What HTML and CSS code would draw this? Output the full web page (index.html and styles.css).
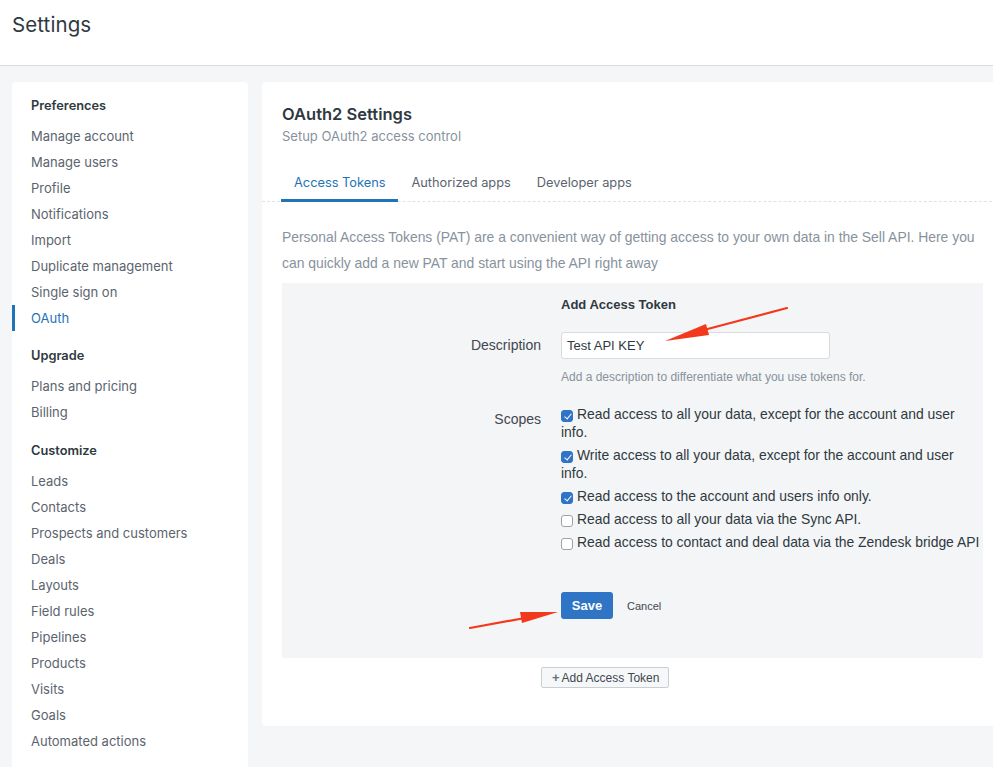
FILE: index.html
```html
<!DOCTYPE html>
<html>
<head>
<meta charset="utf-8">
<link rel="stylesheet" href="styles.css">
</head>
<body>
<div class="page">
  <header class="topbar"><h1>Settings</h1></header>
  <div class="content">
    <nav class="sidebar">
      <div class="group">
        <div class="group-title">Preferences</div>
        <a class="item">Manage account</a>
        <a class="item">Manage users</a>
        <a class="item">Profile</a>
        <a class="item">Notifications</a>
        <a class="item">Import</a>
        <a class="item">Duplicate management</a>
        <a class="item">Single sign on</a>
        <a class="item active">OAuth</a>
      </div>
      <div class="group">
        <div class="group-title">Upgrade</div>
        <a class="item">Plans and pricing</a>
        <a class="item">Billing</a>
      </div>
      <div class="group group-last">
        <div class="group-title">Customize</div>
        <a class="item">Leads</a>
        <a class="item">Contacts</a>
        <a class="item">Prospects and customers</a>
        <a class="item">Deals</a>
        <a class="item">Layouts</a>
        <a class="item">Field rules</a>
        <a class="item">Pipelines</a>
        <a class="item">Products</a>
        <a class="item">Visits</a>
        <a class="item">Goals</a>
        <a class="item">Automated actions</a>
      </div>
    </nav>
    <main class="card">
      <h2 class="card-title">OAuth2 Settings</h2>
      <div class="card-sub">Setup OAuth2 access control</div>
      <div class="tabs">
        <span class="tab active">Access Tokens</span>
        <span class="tab">Authorized apps</span>
        <span class="tab">Developer apps</span>
      </div>
      <p class="intro">Personal Access Tokens (PAT) are a convenient way of getting access to your own data in the Sell API. Here you can quickly add a new PAT and start using the API right away</p>
      <section class="panel">
        <div class="row">
          <div class="label"></div>
          <div class="field"><div class="panel-title">Add Access Token</div></div>
        </div>
        <div class="row row-desc">
          <div class="label">Description</div>
          <div class="field">
            <div class="input">Test API KEY</div>
            <div class="help">Add a description to differentiate what you use tokens for.</div>
          </div>
        </div>
        <div class="row row-scopes">
          <div class="label">Scopes</div>
          <div class="field scopes">
            <div class="scope"><span class="cb on"></span>Read access to all your data, except for the account and user info.</div>
            <div class="scope"><span class="cb on"></span>Write access to all your data, except for the account and user info.</div>
            <div class="scope"><span class="cb on"></span>Read access to the account and users info only.</div>
            <div class="scope"><span class="cb"></span>Read access to all your data via the Sync API.</div>
            <div class="scope"><span class="cb"></span>Read access to contact and deal data via the Zendesk bridge API</div>
          </div>
        </div>
        <div class="row row-actions">
          <div class="label"></div>
          <div class="field actions">
            <button class="btn-save">Save</button>
            <span class="cancel">Cancel</span>
          </div>
        </div>
      </section>
      <div class="add-wrap"><button class="btn-add"><span class="plus">+</span>Add Access Token</button></div>
    </main>
  </div>
  <svg class="arrows" width="993" height="767" viewBox="0 0 993 767">
    <line x1="787" y1="308" x2="700" y2="331" stroke="#f2391b" stroke-width="2.2" stroke-linecap="round"/>
    <polygon points="665,341 706,324 709,335" fill="#f2391b"/>
    <line x1="470" y1="628" x2="525" y2="618" stroke="#f2391b" stroke-width="2.2" stroke-linecap="round"/>
    <polygon points="558,612 520,612 522,623" fill="#f2391b"/>
  </svg>
</div>
</body>
</html>
```
FILE: styles.css
```css
* { box-sizing: border-box; }
html, body { margin: 0; padding: 0; }
body {
  background: #f5f6f7;
  font-family: Inter, "Noto Sans", sans-serif;
  color: #2f3941;
  width: 993px;
  height: 767px;
  overflow: hidden;
}
.page { position: relative; width: 993px; height: 767px; overflow: hidden; }
.topbar {
  height: 66px;
  background: #fff;
  border-bottom: 1px solid #d8dcde;
  padding: 11px 12px 0;
}
.topbar h1 {
  margin: 0;
  font-weight: 400;
  font-size: 20.5px;
  line-height: 28px;
  color: #2f3941;
  letter-spacing: 0.1px;
}
.content {
  display: flex;
  gap: 14px;
  padding: 16px 0 0 12px;
  align-items: flex-start;
}
.sidebar {
  width: 236px;
  flex: none;
  background: #fff;
  border-radius: 4px;
  padding: 14px 0 40px;
  height: 720px;
}
.group { display: flex; flex-direction: column; margin-bottom: 15px; }
.group-title {
  font-weight: 600;
  font-size: 12.8px;
  line-height: 20px;
  padding-left: 19px;
  margin-bottom: 7px;
  color: #2f3941;
}
.group-last .group-title { margin-top: 1px; }
.item {
  font-size: 13px;
  line-height: 26px;
  padding-left: 16px;
  color: #5b646e;
  border-left: 3px solid transparent;
  white-space: nowrap;
}
.item.active { border-left-color: #1f73b7; color: #1f73b7; }
.card {
  width: 760px;
  flex: none;
  background: #fff;
  border-radius: 4px;
  padding: 21px 0 38px 20px;
}
.card-title {
  margin: 0;
  font-size: 16.5px;
  line-height: 22px;
  font-weight: 600;
  color: #2f3941;
}
.card-sub {
  font-size: 13px;
  line-height: 18px;
  color: #87929d;
  margin-top: 2px;
}
.tabs {
  display: flex;
  margin: 23px 0 0 -20px;
  padding-left: 19px;
  border-bottom: 1px dashed #dfe2e5;
}
.tab {
  font-size: 12.8px;
  line-height: 20px;
  padding: 5px 13px 6px;
  color: #5b646e;
  border-bottom: 3px solid transparent;
  margin-bottom: -1px;
}
.tab.active { color: #1f73b7; border-bottom-color: #1f73b7; }
.intro {
  margin: 22px 10px 7px 0;
  font-family: "Liberation Sans", Arial, sans-serif;
  font-size: 13.9px;
  line-height: 26px;
  color: #87929d;
  width: 705px;
}
.panel {
  width: 701px;
  background: #f4f5f6;
  padding: 11px 0 39px;
  font-family: "Liberation Sans", Arial, sans-serif;
}
.row { display: flex; gap: 20px; }
.label {
  width: 259px;
  flex: none;
  text-align: right;
  font-size: 14px;
  color: #3f4750;
}
.field { flex: 1; min-width: 0; }
.panel-title {
  font-weight: 700;
  font-size: 13px;
  line-height: 22px;
  color: #2f3941;
}
.row-desc { margin-top: 16px; }
.row-desc .label { line-height: 27px; }
.input {
  width: 269px;
  height: 27px;
  background: #fff;
  border: 1px solid #d8dcde;
  border-radius: 3px;
  padding: 0 5px;
  font-size: 13px;
  line-height: 25px;
  color: #2f3941;
}
.help {
  font-size: 12px;
  line-height: 16px;
  color: #87929d;
  margin-top: 10px;
}
.row-scopes { margin-top: 20px; }
.row-scopes .label { line-height: 18px; padding-top: 5px; }
.scopes { display: flex; flex-direction: column; gap: 5px; }
.scope {
  font-size: 13.9px;
  line-height: 18px;
  color: #2f3941;
}
.cb {
  display: inline-block;
  width: 12px;
  height: 12px;
  border: 1px solid #9aa3ab;
  border-radius: 3px;
  background: #fff;
  vertical-align: -3px;
  margin-right: 4px;
  position: relative;
}
.cb.on { background: #2f74c5; border-color: #2f74c5; }
.cb.on::after {
  content: "";
  position: absolute;
  left: 3.5px;
  top: 1px;
  width: 3px;
  height: 6px;
  border: solid #fff;
  border-width: 0 1.6px 1.6px 0;
  transform: rotate(40deg);
}
.row-actions { margin-top: 41px; }
.actions { display: flex; align-items: center; gap: 14px; }
.btn-save {
  width: 52px;
  height: 27px;
  border: none;
  border-radius: 3px;
  background: #2f74c5;
  color: #fff;
  font-family: "Liberation Sans", Arial, sans-serif;
  font-weight: 700;
  font-size: 13px;
  padding: 0;
}
.cancel { font-size: 11px; color: #3f4750; }
.add-wrap { padding-left: 259px; margin-top: 8px; }
.btn-add {
  height: 21px;
  padding: 0 9px 0 10px;
  background: #f6f7f8;
  border: 1px solid #c9ced3;
  border-radius: 2px;
  font-family: "Liberation Sans", Arial, sans-serif;
  font-size: 12px;
  color: #3f4750;
}
.plus { font-weight: 700; font-size: 13px; margin-right: 2px; color: #68737d; }
.arrows { position: absolute; left: 0; top: 0; pointer-events: none; }
```
